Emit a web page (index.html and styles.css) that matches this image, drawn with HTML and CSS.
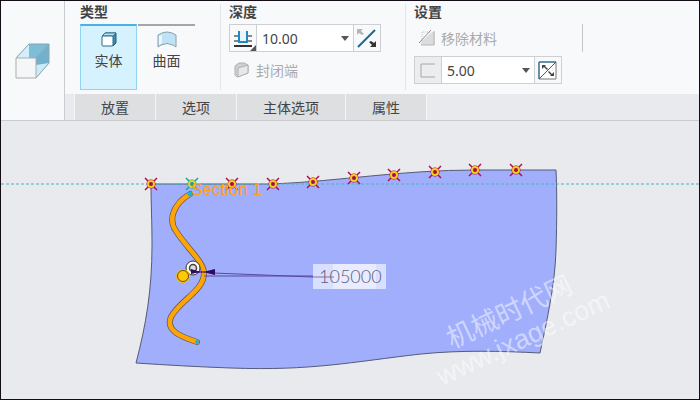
FILE: index.html
```html
<!DOCTYPE html>
<html lang="zh-CN">
  <head>
    <meta charset="UTF-8" />
    <meta name="viewport" content="width=device-width, initial-scale=1.0" />
    <title>拉伸</title>
    <link rel="stylesheet" href="styles.css">
  </head>
  <body>
    <header class="ribbon">
      <div class="feature">
        <svg width="36" height="36" viewBox="0 0 36 36">
          <path d="M1 15 L14 1 H34 V20 L21 35 H1 Z" fill="#e2f5fd" />
          <path d="M1 15 L14 1 H34 L21 15 Z" fill="#7dbdd8" />
          <path d="M1 15 L14 1 V15 Z" fill="#d3effb" />
          <path d="M21 15 L34 1 V20 L21 35 Z" fill="#71b1cd" />
          <path d="M21 35 V22 L34 20 Z" fill="#c9ebfa" />
          <path d="M1 15 L14 1 H34 V20 L21 35 M21 15 L34 1" fill="none" stroke="#8aa6af" />
          <path d="M1 15 H21 V35 H1 Z" fill="#f5f6f7" stroke="#adadad" />
        </svg>
      </div>

      <div class="ribbon-main">
        <div class="groups">
          <!-- Type -->
          <section class="group type">
            <h2>类型</h2>
            <div class="tiles">
              <button class="tile active">
                <svg width="18" height="18" viewBox="0 0 18 18">
                  <path d="M2 5 L5 2 H16 V12 L13 15 Z" fill="#3d8eac" stroke="#1b5f78" />
                  <path d="M2 5 L5 2 H16 L13 5 Z" fill="#b5e1f2" stroke="#35738a" />
                  <rect x="2" y="5" width="11" height="10" rx="1" fill="#fff" stroke="#286b84" />
                </svg>
                实体
              </button>
              <button class="tile">
                <svg width="20" height="18" viewBox="0 0 20 18">
                  <path d="M1 4 Q10 -2 19 4 V16 L16 14 Q10 11 4 14 L1 16 Z" fill="#bfe3f5" stroke="#8aa0aa" />
                  <path d="M2 5 L5 4 V12 L2 14 Z" fill="#e9f8ff" />
                </svg>
                曲面
              </button>
            </div>
          </section>

          <!-- Depth -->
          <section class="group depth">
            <h2>深度</h2>
            <div class="combo">
              <button class="combo-icon" aria-label="深度选项">
                <svg width="26" height="26" viewBox="0 0 26 26">
                  <path d="M4 11 H8 M4 16 H8 M18 11 H22 M18 16 H22" stroke="#888" stroke-width="2" />
                  <path d="M9 6 V17 H17 V6" fill="#eaf6fc" stroke="#1e8bc0" stroke-width="2" />
                  <path d="M4 21 H22" stroke="#333" stroke-width="2" />
                  <path d="M26 20 V26 H20 Z" fill="#555" />
                </svg>
              </button>
              <div class="combo-field">
                <select aria-label="深度">
                  <option>10.00</option>
                </select>
              </div>
              <button class="combo-icon" aria-label="反向">
                <svg width="26" height="26" viewBox="0 0 26 26">
                  <path d="M4 22 L21 5" stroke="#176a8e" stroke-width="2" />
                  <path d="M3 4 H9 L7 6 L10 9 L8 10 L5 8 L3 10 Z" fill="#b5b5b5" />
                  <path d="M22 22 H16 L18 20 L15 17 L17 16 L20 18 L22 16 Z" fill="#333" />
                </svg>
              </button>
            </div>
            <button class="command" disabled>
              <svg width="18" height="18" viewBox="0 0 18 18">
                <path d="M2 5 L6 2 Q12 1 15 4 V12 L4 16 L2 14 Z" fill="#cfcfcf" stroke="#b0b0b0" />
                <path d="M5 7 L15 4 V12 L5 16 Z" fill="#e8e8e8" stroke="#b0b0b0" />
              </svg>
              封闭端
            </button>
          </section>

          <!-- Settings -->
          <section class="group settings">
            <h2>设置</h2>
            <button class="command" disabled>
              <svg width="18" height="18" viewBox="0 0 18 18">
                <path d="M3 16 V13 L14 3 H17 V16 Z" fill="#dcdcdc" />
                <path d="M4 12 V3 H13" fill="none" stroke="#c4c4c4" stroke-dasharray="1 1" />
                <path d="M16 2 V16 H3" fill="none" stroke="#b8b8b8" />
                <path d="M1 14 L13 1" stroke="#8c8c8c" />
              </svg>
              移除材料
            </button>
            <div class="combo">
              <button class="combo-icon disabled" aria-label="加厚草绘" disabled>
                <svg width="26" height="26" viewBox="0 0 26 26">
                  <path d="M20 7 H6 V20 H20" fill="none" stroke="#a6a6a6" />
                </svg>
              </button>
              <div class="combo-field">
                <select aria-label="厚度">
                  <option>5.00</option>
                </select>
              </div>
              <button class="combo-icon" aria-label="切换侧">
                <svg width="26" height="26" viewBox="0 0 26 26">
                  <path d="M4 5 H21 V22 H4 Z" fill="#fff" stroke="#777" />
                  <path d="M4 22 V5 H21 L4 22" fill="none" stroke="#176a8e" />
                  <path d="M7 8 H11 L10 9 L13 12 L12 13 L9 10 L7 12 Z" fill="#444" />
                  <path d="M19 19 H15 L16 18 L13 15 L14 14 L17 17 L19 15 Z" fill="#444" />
                </svg>
              </button>
            </div>
          </section>
          <div class="divider"></div>
        </div>

        <nav class="tabs">
          <button>放置</button>
          <button>选项</button>
          <button>主体选项</button>
          <button>属性</button>
        </nav>
      </div>
    </header>

    <main class="viewport">
      <svg class="model" viewBox="0 121 698 278" preserveAspectRatio="xMinYMin slice">
        <defs>
          <g id="point">
            <path d="M-6 -6 L6 6 M6 -6 L-6 6" stroke="#b00f50" stroke-width="1.5" />
            <circle r="4.5" fill="#b00f50" />
            <circle r="3" fill="#a50b50" stroke="#f5cb20" stroke-width="2" />
          </g>
        </defs>

        <path class="surface" d="M150 184 H272 C340 181 400 170 475 170 L555 170 C556 190 556 220 555 250 C554 285 546 320 539 353 C500 351 460 350 420 354 C350 362 310 371 230 368 C200 367 165 365 135 363 C145 325 151 290 151 245 C151 220 150 205 150 184 Z" />
        <path class="datum" d="M0 184 H698" />

        <!-- Sweep curve -->
        <g class="curve">
          <path class="curve-edge" d="M189 194 C172 204 167 220 175 231 C185 247 203 262 203 273 C203 291 179 300 170 317 C164 331 181 337 196 342" />
          <path class="curve-fill" d="M189 194 C172 204 167 220 175 231 C185 247 203 262 203 273 C203 291 179 300 170 317 C164 331 181 337 196 342" />
          <circle cx="189" cy="194" r="2.5" fill="#18b5d8" />
          <circle cx="196" cy="342" r="2" fill="#18b5d8" />
        </g>

        <use href="#point" x="150" y="184" />
        <g transform="translate(191 184)">
          <path d="M-6 -6 L6 6 M6 -6 L-6 6" stroke="#12a5a5" stroke-width="1.5" />
          <circle r="4.5" fill="#12a5a5" />
          <circle r="3" fill="#12a5a5" stroke="#e3cf3c" stroke-width="2" />
        </g>
        <use href="#point" x="231" y="184" />
        <use href="#point" x="272" y="184" />
        <use href="#point" x="312" y="182" />
        <use href="#point" x="353" y="178" />
        <use href="#point" x="393" y="175" />
        <use href="#point" x="434" y="172" />
        <use href="#point" x="474" y="170" />
        <use href="#point" x="515" y="170" />
        <text class="section-label" x="190" y="195">Section 1</text>

        <!-- Dimension with its drag handle -->
        <path d="M203 276 H312 M212 273 L312 277" fill="none" stroke="#5a4a9c" />
        <circle cx="192" cy="268" r="7" fill="#fff" stroke="#333" />
        <circle cx="192" cy="268" r="3.5" fill="#ddd" stroke="#444" stroke-width="1.5" />
        <path d="M190 272 H204" stroke="#32095e" />
        <path d="M202 272 L214 269 V275 Z" fill="#32095e" />
        <path d="M190 269 L200 272 L190 274 Z" fill="#32095e" />
        <circle cx="182" cy="276" r="7" fill="#f9b80a" />
        <circle cx="182" cy="276" r="5.5" fill="#ffc80a" stroke="#6c5410" />
        <rect x="312" y="264" width="73" height="25" fill="#fff" fill-opacity=".6" />
        <rect x="332" y="264" width="43" height="25" fill="#fff" fill-opacity=".4" />
        <path d="M312 277 H333" stroke="#7d7a9c" />
        <text class="dimension" x="318" y="283">105000</text>

        <g class="watermark">
          <text transform="translate(451 349) rotate(-25)">机械时代网</text>
          <text transform="translate(441 386) rotate(-25)">www.jxage.com</text>
        </g>
      </svg>
    </main>
  </body>
</html>
```
FILE: styles.css
```css
* {
  box-sizing: border-box;
}

body {
  margin: 0;
  height: 100vh;
  display: flex;
  flex-direction: column;
  border: 1px solid #140d18;
  background-color: #e8eaed;
  color: #444;
  font-family: "Noto Sans", "Noto Sans CJK SC", sans-serif;
  font-size: 14px;
}

button,
select {
  font: inherit;
  color: inherit;
  border: none;
  margin: 0;
  padding: 0;
  background: none;
}

svg {
  display: block;
}

/* Ribbon */
.ribbon {
  display: flex;
  background-color: #f8f9fb;
  border-bottom: 1px solid #c9cbce;
}

.feature {
  flex: none;
  width: 64px;
  display: flex;
  align-items: center;
  justify-content: center;
  border-right: 1px solid #c9ccd0;
}

.ribbon-main {
  flex: 1;
}

.groups {
  display: flex;
  padding: 3px 0 4px 7px;
}

.group {
  padding: 0 24px 0 8px;
}

.group + .group {
  border-left: 1px solid #e3e5e8;
}

.group h2 {
  margin: 0 0 4px;
  font-size: 14px;
  line-height: 16px;
}

.type {
  padding-right: 25px;
}

.settings {
  padding-right: 20px;
}

.tiles {
  display: flex;
  gap: 1px;
}

.tile {
  width: 57px;
  height: 66px;
  display: flex;
  flex-direction: column;
  align-items: center;
  padding-top: 5px;
  line-height: 22px;
  border-top: 2px solid #a4a6a8;
}

.tile svg {
  margin-bottom: 1px;
}

.tile.active {
  background-color: #d5f2fe;
  border: 1px solid #8fd4f3;
  border-top: 2px solid #4bb0e2;
}

.combo {
  display: flex;
  height: 28px;
  background-color: #fff;
  border: 1px solid #cdcfd2;
}

.combo-icon {
  width: 26px;
  background-color: #f8f9fb;
}

.combo-icon.disabled {
  background-color: #ecedef;
}

.combo-field {
  position: relative;
  border: solid #cdcfd2;
  border-width: 0 1px;
}

.combo-field select {
  width: 96px;
  height: 26px;
  padding-left: 5px;
  appearance: none;
}

.settings select {
  width: 92px;
}

/* drop-down arrow */
.combo-field::after {
  content: "";
  position: absolute;
  right: 4px;
  top: 11px;
  border: 4px solid transparent;
  border-top: 5px solid #555;
  border-bottom: none;
  pointer-events: none;
}

.command {
  display: flex;
  align-items: center;
  gap: 5px;
  height: 28px;
  padding-left: 4px;
  color: #a9abad;
}

.combo + .command,
.command + .combo {
  margin-top: 4px;
}

.divider {
  height: 28px;
  margin-top: 20px;
  border-left: 1px solid #c4c6c9;
}

/* Tabs under the groups */
.tabs {
  display: flex;
  gap: 1px;
  padding-left: 10px;
  background-color: #e8eaed;
}

.tabs button {
  height: 26px;
  padding: 0 26px;
  background-color: #dedfe1;
  box-shadow: -1px 0 #f4f5f6, 1px 0 #f4f5f6;
}

/* Graphics area */
.viewport {
  flex: 1;
  min-height: 0;
}

.model {
  width: 100%;
  height: 100%;
}

.surface {
  fill: #a0aefc;
  stroke: #555b78;
}

.datum {
  stroke: #45b8c0;
  stroke-dasharray: 3 2;
}

.curve path {
  fill: none;
  stroke-linecap: round;
}

.curve-edge {
  stroke: #5e5a50;
  stroke-width: 6;
}

.curve-fill {
  stroke: #ffa408;
  stroke-width: 4.5;
}

.section-label {
  font-family: "Liberation Sans", sans-serif;
  font-size: 17px;
  fill: #ffa010;
}

.dimension {
  font-family: Lato, sans-serif;
  font-size: 18px;
  font-weight: 300;
  fill: #625c80;
}

.watermark {
  font-family: "Liberation Sans", "Noto Sans CJK SC", sans-serif;
  font-size: 27px;
  fill: #fff;
  fill-opacity: 0.5;
}
```
